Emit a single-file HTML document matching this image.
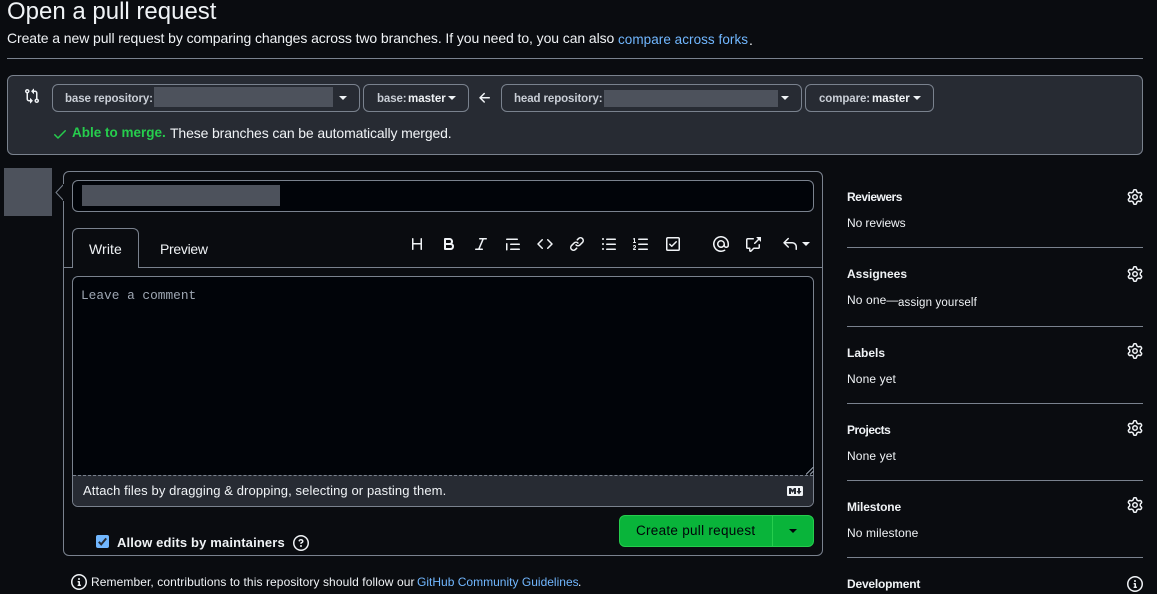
<!DOCTYPE html>
<html><head><meta charset="utf-8">
<style>
html,body{margin:0;padding:0;width:1157px;height:594px;overflow:hidden;background:#0a0c10}
body{position:relative;font-family:"Liberation Sans",sans-serif;color:#f0f3f6;font-size:14px}
.t{position:absolute;white-space:nowrap;line-height:20px;height:20px}
.b{position:absolute;box-sizing:border-box;border:1px solid #7a828e;border-radius:6px}
.f{position:absolute}
.sk{position:absolute;background:#4d525c}
svg.i{position:absolute;width:16px;height:16px;fill:#f0f3f6}
.hr{position:absolute;height:1px;background:#7a828e}
.btn{background:#272b33;height:28px;top:84px}
.mut{color:#c9ced6;font-weight:bold;font-size:11.5px;letter-spacing:-.1px}
.wh{color:#f0f3f6;font-weight:bold;font-size:11.5px}
.car{position:absolute;width:0;height:0;border-left:4px solid transparent;border-right:4px solid transparent;border-top:4px solid #f0f3f6}
.sh{font-size:12px;font-weight:bold;left:847px}
.sv{font-size:12px;left:847px}
a{color:#71b7ff;text-decoration:none}
</style></head><body>
<svg width="0" height="0" style="position:absolute"><defs>
<symbol id="gear" viewBox="0 0 16 16"><path d="M8 0a8.2 8.2 0 0 1 .701.031C9.444.095 9.99.645 10.16 1.29l.288 1.107c.018.066.079.158.212.224.231.114.454.243.668.386.123.082.233.09.299.071l1.103-.303c.644-.176 1.392.021 1.82.63.27.385.506.792.704 1.218.315.675.111 1.422-.364 1.891l-.814.806c-.049.048-.098.147-.088.294.016.257.016.515 0 .772-.01.147.038.246.088.294l.814.806c.475.469.679 1.216.364 1.891a7.977 7.977 0 0 1-.704 1.217c-.428.61-1.176.807-1.82.63l-1.102-.302c-.067-.019-.177-.011-.3.071a5.909 5.909 0 0 1-.668.386c-.133.066-.194.158-.211.224l-.29 1.106c-.168.646-.715 1.196-1.458 1.26a8.006 8.006 0 0 1-1.402 0c-.743-.064-1.289-.614-1.458-1.26l-.289-1.106c-.018-.066-.079-.158-.212-.224a5.738 5.738 0 0 1-.668-.386c-.123-.082-.233-.09-.299-.071l-1.103.303c-.644.176-1.392-.021-1.82-.63a8.12 8.12 0 0 1-.704-1.218c-.315-.675-.111-1.422.363-1.891l.815-.806c.05-.048.098-.147.088-.294a6.214 6.214 0 0 1 0-.772c.01-.147-.038-.246-.088-.294l-.815-.806C.635 6.045.431 5.298.746 4.623a7.92 7.92 0 0 1 .704-1.217c.428-.61 1.176-.807 1.82-.63l1.102.302c.067.019.177.011.3-.071.214-.143.437-.272.668-.386.133-.066.194-.158.211-.224l.29-1.106C6.009.645 6.556.095 7.299.03 7.53.01 7.764 0 8 0Zm-.571 1.525c-.036.003-.108.036-.137.146l-.289 1.105c-.147.561-.549.967-.998 1.189-.173.086-.34.183-.5.29-.417.278-.97.423-1.529.27l-1.103-.303c-.109-.03-.175.016-.195.045-.22.312-.412.644-.573.99-.014.031-.021.11.059.19l.815.806c.411.406.562.957.53 1.456a4.709 4.709 0 0 0 0 .582c.032.499-.119 1.05-.53 1.456l-.815.806c-.081.08-.073.159-.059.19.162.346.353.677.573.989.02.03.085.076.195.046l1.102-.303c.56-.153 1.113-.008 1.53.27.161.107.328.204.501.29.447.222.85.629.997 1.189l.289 1.105c.029.109.101.143.137.146a6.6 6.6 0 0 0 1.142 0c.036-.003.108-.036.137-.146l.289-1.105c.147-.561.549-.967.998-1.189.173-.086.34-.183.5-.29.417-.278.97-.423 1.529-.27l1.103.303c.109.029.175-.016.195-.045.22-.313.411-.644.573-.99.014-.031.021-.11-.059-.19l-.815-.806c-.411-.406-.562-.957-.53-1.456a4.709 4.709 0 0 0 0-.582c-.032-.499.119-1.05.53-1.456l.815-.806c.081-.08.073-.159.059-.19a6.464 6.464 0 0 0-.573-.989c-.02-.03-.085-.076-.195-.046l-1.102.303c-.56.153-1.113.008-1.53-.27a4.44 4.44 0 0 0-.501-.29c-.447-.222-.85-.629-.997-1.189l-.289-1.105c-.029-.11-.101-.143-.137-.146a6.6 6.6 0 0 0-1.142 0ZM11 8a3 3 0 1 1-6 0 3 3 0 0 1 6 0ZM9.5 8a1.5 1.5 0 1 0-3.001.001A1.5 1.5 0 0 0 9.5 8Z"/></symbol>
<symbol id="info" viewBox="0 0 16 16"><path d="M0 8a8 8 0 1 1 16 0A8 8 0 0 1 0 8Zm8-6.5a6.5 6.5 0 1 0 0 13 6.5 6.5 0 0 0 0-13ZM6.5 7.75A.75.75 0 0 1 7.25 7h1a.75.75 0 0 1 .75.75v2.75h.25a.75.75 0 0 1 0 1.5h-2a.75.75 0 0 1 0-1.5h.25v-2h-.25a.75.75 0 0 1-.75-.75ZM8 6a1 1 0 1 1 0-2 1 1 0 0 1 0 2Z"/></symbol>
</defs></svg>

<div class="t" style="left:7px;top:-3px;font-size:24px;line-height:30px;height:30px">Open a pull request</div>
<div class="t" style="left:7px;top:28px;letter-spacing:-.087px">Create a new pull request by comparing changes across two branches. If you need to, you can also</div>
<div class="t" style="left:618px;top:30px;font-size:13.5px;letter-spacing:.05px"><a>compare across forks</a></div>
<div class="t" style="left:749px;top:30px">.</div>
<div class="hr" style="left:7px;top:58px;width:1136px"></div>

<div class="b" style="left:7px;top:75px;width:1136px;height:80px;background:#272b33"></div>
<svg class="i" style="left:24px;top:88px" viewBox="0 0 16 16"><path d="M9.573.677A.25.25 0 0 1 10 .854V2.5h1A2.5 2.5 0 0 1 13.5 5v5.628a2.251 2.251 0 1 1-1.5 0V5a1 1 0 0 0-1-1h-1v1.646a.25.25 0 0 1-.427.177L7.177 3.427a.25.25 0 0 1 0-.354ZM6 12v-1.646a.25.25 0 0 1 .427-.177l2.396 2.396a.25.25 0 0 1 0 .354l-2.396 2.396A.25.25 0 0 1 6 15.146V13.5H5A2.5 2.5 0 0 1 2.5 11V5.372a2.25 2.25 0 1 1 1.5 0V11a1 1 0 0 0 1 1ZM4 3.25a.75.75 0 1 0-1.5 0 .75.75 0 0 0 1.5 0ZM12.75 12a.75.75 0 1 0 0 1.5.75.75 0 0 0 0-1.5Z"/></svg>

<div class="b btn" style="left:52px;width:308px"></div>
<div class="t mut" style="left:65px;top:89px">base repository:</div>
<div class="sk" style="left:154px;top:87px;width:179px;height:20px"></div>
<div class="car" style="left:339px;top:96px"></div>
<div class="b btn" style="left:363px;width:106px"></div>
<div class="t mut" style="left:377px;top:89px">base:</div>
<div class="t wh" style="left:408px;top:89px">master</div>
<div class="car" style="left:448px;top:96px"></div>
<svg class="i" style="left:477px;top:90px" viewBox="0 0 16 16"><path d="M7.78 12.53a.75.75 0 0 1-1.06 0L2.47 8.28a.75.75 0 0 1 0-1.06l4.25-4.25a.751.751 0 0 1 1.042.018.751.751 0 0 1 .018 1.042L4.81 7h7.44a.75.75 0 0 1 0 1.5H4.81l2.97 2.97a.75.75 0 0 1 0 1.06Z"/></svg>
<div class="b btn" style="left:501px;width:301px"></div>
<div class="t mut" style="left:514px;top:89px">head repository:</div>
<div class="sk" style="left:604px;top:90px;width:174px;height:17px"></div>
<div class="car" style="left:781px;top:96px"></div>
<div class="b btn" style="left:805px;width:129px"></div>
<div class="t mut" style="left:819px;top:89px">compare:</div>
<div class="t wh" style="left:872px;top:89px">master</div>
<div class="car" style="left:913px;top:96px"></div>

<svg class="i" style="left:52px;top:126px;fill:#26cd4d" viewBox="0 0 16 16"><path d="M13.78 4.22a.75.75 0 0 1 0 1.06l-7.25 7.25a.75.75 0 0 1-1.06 0L2.22 9.28a.751.751 0 0 1 .018-1.042.751.751 0 0 1 1.042-.018L6 10.94l6.72-6.72a.75.75 0 0 1 1.06 0Z"/></svg>
<div class="t" style="left:72px;top:123px;font-weight:bold;color:#26cd4d;font-size:13.5px">Able to merge.</div>
<div class="t" style="left:170px;top:123px;letter-spacing:-.13px">These branches can be automatically merged.</div>

<div class="sk" style="left:4px;top:168px;width:48px;height:48px"></div>

<div class="b" style="left:63px;top:171px;width:760px;height:385px"></div>
<svg style="position:absolute;left:55px;top:184px" width="9" height="17"><path d="M8.5 0.5L1 8.5L8.5 16.5" fill="#0a0c10" stroke="#7a828e"/><rect x="8" y="0" width="1" height="17" fill="#0a0c10"/></svg>

<div class="b" style="left:72px;top:180px;width:742px;height:32px;background:#010409"></div>
<div class="sk" style="left:82px;top:185px;width:198px;height:21px"></div>

<div class="hr" style="left:64px;top:267px;width:758px"></div>
<div class="f" style="left:72px;top:228px;width:67px;height:40px;box-sizing:border-box;border:1px solid #7a828e;border-bottom:0;border-radius:6px 6px 0 0;background:#0a0c10"></div>
<div class="t" style="left:89px;top:239px;letter-spacing:.1px">Write</div>
<div class="t" style="left:160px;top:239px;letter-spacing:-.3px">Preview</div>

<svg class="i" style="left:409px;top:236px" viewBox="0 0 16 16"><path d="M3.75 2a.75.75 0 0 1 .75.75V7h7V2.75a.75.75 0 0 1 1.5 0v10.5a.75.75 0 0 1-1.5 0V8.5h-7v4.75a.75.75 0 0 1-1.5 0V2.75A.75.75 0 0 1 3.75 2Z"/></svg>
<svg class="i" style="left:441px;top:236px" viewBox="0 0 16 16"><path d="M4 2h4.5a3.501 3.501 0 0 1 2.852 5.53A3.499 3.499 0 0 1 9.5 14H4a1 1 0 0 1-1-1V3a1 1 0 0 1 1-1Zm1 7v3h4.5a1.5 1.5 0 0 0 0-3Zm3.5-2a1.5 1.5 0 0 0 0-3H5v3Z"/></svg>
<svg class="i" style="left:473px;top:236px" viewBox="0 0 16 16"><path d="M6 2.75A.75.75 0 0 1 6.75 2h6.5a.75.75 0 0 1 0 1.5h-2.505l-3.858 9H9.25a.75.75 0 0 1 0 1.5h-6.5a.75.75 0 0 1 0-1.5h2.505l3.858-9H6.75A.75.75 0 0 1 6 2.75Z"/></svg>
<svg class="i" style="left:505px;top:236px" viewBox="0 0 16 16"><path d="M1.75 2.5h10.5a.75.75 0 0 1 0 1.5H1.75a.75.75 0 0 1 0-1.5Zm4 5h8.5a.75.75 0 0 1 0 1.5h-8.5a.75.75 0 0 1 0-1.5Zm0 5h8.5a.75.75 0 0 1 0 1.5h-8.5a.75.75 0 0 1 0-1.5ZM2.5 7.75v6a.75.75 0 0 1-1.5 0v-6a.75.75 0 0 1 1.5 0Z"/></svg>
<svg class="i" style="left:537px;top:236px" viewBox="0 0 16 16"><path d="m11.28 3.22 4.25 4.25a.75.75 0 0 1 0 1.06l-4.25 4.25a.749.749 0 0 1-1.275-.326.749.749 0 0 1 .215-.734L13.94 8l-3.72-3.72a.749.749 0 0 1 .326-1.275.749.749 0 0 1 .734.215Zm-6.56 0a.751.751 0 0 1 1.042.018.751.751 0 0 1 .018 1.042L2.06 8l3.72 3.72a.749.749 0 0 1-.326 1.275.749.749 0 0 1-.734-.215L.47 8.53a.75.75 0 0 1 0-1.06Z"/></svg>
<svg class="i" style="left:569px;top:236px" viewBox="0 0 16 16"><path d="m7.775 3.275 1.25-1.25a3.5 3.5 0 1 1 4.95 4.95l-2.5 2.5a3.5 3.5 0 0 1-4.95 0 .751.751 0 0 1 .018-1.042.751.751 0 0 1 1.042-.018 1.998 1.998 0 0 0 2.83 0l2.5-2.5a2.002 2.002 0 0 0-2.83-2.83l-1.25 1.25a.751.751 0 0 1-1.042-.018.751.751 0 0 1-.018-1.042Zm-4.69 9.64a1.998 1.998 0 0 0 2.83 0l1.25-1.25a.751.751 0 0 1 1.042.018.751.751 0 0 1 .018 1.042l-1.25 1.25a3.5 3.5 0 1 1-4.95-4.95l2.5-2.5a3.5 3.5 0 0 1 4.95 0 .751.751 0 0 1-.018 1.042.751.751 0 0 1-1.042.018 1.998 1.998 0 0 0-2.83 0l-2.5 2.5a1.998 1.998 0 0 0 0 2.83Z"/></svg>
<svg class="i" style="left:601px;top:236px" viewBox="0 0 16 16"><path d="M5.75 2.5h8.5a.75.75 0 0 1 0 1.5h-8.5a.75.75 0 0 1 0-1.5Zm0 5h8.5a.75.75 0 0 1 0 1.5h-8.5a.75.75 0 0 1 0-1.5Zm0 5h8.5a.75.75 0 0 1 0 1.5h-8.5a.75.75 0 0 1 0-1.5ZM2 14a1 1 0 1 1 0-2 1 1 0 0 1 0 2Zm1-6a1 1 0 1 1-2 0 1 1 0 0 1 2 0ZM2 4a1 1 0 1 1 0-2 1 1 0 0 1 0 2Z"/></svg>
<svg class="i" style="left:633px;top:236px" viewBox="0 0 16 16"><path d="M5 3.25a.75.75 0 0 1 .75-.75h8.5a.75.75 0 0 1 0 1.5h-8.5A.75.75 0 0 1 5 3.25Zm0 5a.75.75 0 0 1 .75-.75h8.5a.75.75 0 0 1 0 1.5h-8.5A.75.75 0 0 1 5 8.25Zm0 5a.75.75 0 0 1 .75-.75h8.5a.75.75 0 0 1 0 1.5h-8.5a.75.75 0 0 1-.75-.75ZM.924 10.32a.5.5 0 0 1-.851-.525l.001-.001.001-.002.002-.004.007-.011c.097-.144.215-.273.348-.384.228-.19.588-.392 1.068-.392.468 0 .858.181 1.126.484.259.294.377.673.377 1.038 0 .987-.686 1.495-1.156 1.845l-.047.035c-.303.225-.522.4-.654.597h1.357a.5.5 0 0 1 0 1H.5a.5.5 0 0 1-.5-.5c0-1.005.692-1.52 1.167-1.875l.035-.025c.531-.396.8-.625.8-1.078a.57.57 0 0 0-.128-.376C1.806 10.068 1.695 10 1.5 10a.658.658 0 0 0-.429.163.835.835 0 0 0-.144.153ZM2.003 2.5V6h.503a.5.5 0 0 1 0 1H.5a.5.5 0 0 1 0-1h.503V3.308l-.28.14a.5.5 0 0 1-.446-.895l1.003-.5a.5.5 0 0 1 .723.447Z"/></svg>
<svg class="i" style="left:665px;top:236px" viewBox="0 0 16 16"><path d="M2.75 1h10.5c.966 0 1.75.784 1.75 1.75v10.5A1.75 1.75 0 0 1 13.25 15H2.75A1.75 1.75 0 0 1 1 13.25V2.75C1 1.784 1.784 1 2.75 1ZM2.5 2.75v10.5c0 .138.112.25.25.25h10.5a.25.25 0 0 0 .25-.25V2.75a.25.25 0 0 0-.25-.25H2.75a.25.25 0 0 0-.25.25Zm9.28 3.53-4.5 4.5a.75.75 0 0 1-1.06 0l-2-2a.751.751 0 0 1 .018-1.042.751.751 0 0 1 1.042-.018l1.47 1.47 3.97-3.97a.751.751 0 0 1 1.042.018.751.751 0 0 1 .018 1.042Z"/></svg>
<svg class="i" style="left:713px;top:236px" viewBox="0 0 16 16"><path d="M4.75 2.37a6.501 6.501 0 0 0 6.5 11.26.75.75 0 0 1 .75 1.298A7.999 7.999 0 0 1 .989 4.148 8 8 0 0 1 16 7.75v1.5a2.75 2.75 0 0 1-5.072 1.475 3.999 3.999 0 0 1-6.65-4.19A4 4 0 0 1 12 8v1.25a1.25 1.25 0 0 0 2.5 0V7.867a6.5 6.5 0 0 0-9.75-5.496ZM10.5 8a2.5 2.5 0 1 0-5 0 2.5 2.5 0 0 0 5 0Z"/></svg>
<svg class="i" style="left:745px;top:236px" viewBox="0 0 16 16"><path d="M2.75 3.5a.25.25 0 0 0-.25.25v7.5c0 .138.112.25.25.25h2a.75.75 0 0 1 .75.75v2.19l2.72-2.72a.749.749 0 0 1 .53-.22h4.5a.25.25 0 0 0 .25-.25v-2.5a.75.75 0 0 1 1.5 0v2.5A1.75 1.75 0 0 1 13.25 13H9.06l-2.573 2.573A1.458 1.458 0 0 1 4 14.543V13H2.75A1.75 1.75 0 0 1 1 11.25v-7.5C1 2.784 1.784 2 2.75 2h5.5a.75.75 0 0 1 0 1.5ZM16 1.25v4.146a.25.25 0 0 1-.427.177L14.03 4.03l-3.75 3.75a.749.749 0 0 1-1.275-.326.749.749 0 0 1 .215-.734l3.75-3.75-1.543-1.543A.25.25 0 0 1 11.604 1h4.146a.25.25 0 0 1 .25.25Z"/></svg>
<svg class="i" style="left:782px;top:236px" viewBox="0 0 16 16"><path d="M6.78 1.97a.75.75 0 0 1 0 1.06L3.81 6h6.44A4.75 4.75 0 0 1 15 10.75v2.5a.75.75 0 0 1-1.5 0v-2.5a3.25 3.25 0 0 0-3.25-3.25H3.81l2.97 2.97a.749.749 0 0 1-.326 1.275.749.749 0 0 1-.734-.215L1.47 7.28a.75.75 0 0 1 0-1.06l4.25-4.25a.75.75 0 0 1 1.06 0Z"/></svg>
<div class="car" style="left:802px;top:242px"></div>

<div class="b" style="left:72px;top:276px;width:742px;height:231px;background:#010409;overflow:hidden">
  <div class="f" style="left:0;top:198px;width:740px;height:32px;background:#272b33;border-top:1px dashed #7a828e;box-sizing:border-box"></div>
</div>
<div class="t" style="left:81px;top:286px;font-family:'Liberation Mono',monospace;font-size:12.8px;color:#9ea7b3">Leave a comment</div>
<svg style="position:absolute;left:806px;top:467px" width="8" height="8"><path d="M0 7.5L7.5 0M4 7.5L7.5 4" stroke="#9ea7b3" fill="none"/></svg>
<div class="t" style="left:83px;top:481px;font-size:13px;letter-spacing:.1px">Attach files by dragging &amp; dropping, selecting or pasting them.</div>
<svg class="i" style="left:787px;top:483px" viewBox="0 0 16 16"><path d="M14.85 3c.63 0 1.15.52 1.14 1.15v7.7c0 .63-.51 1.15-1.15 1.15H1.15C.52 13 0 12.48 0 11.84V4.15C0 3.52.52 3 1.15 3ZM9 11V5H7L5.5 7 4 5H2v6h2V8l1.5 1.92L7 8v3Zm2.99.5L14.5 8H13V5h-2v3H9.5Z"/></svg>

<div class="f" style="left:96px;top:535px;width:13px;height:13px;background:#71b7ff;border-radius:2px"></div>
<svg style="position:absolute;left:96px;top:535px" width="13" height="13"><path d="M2.8 6.8L5.2 9.4L10.2 3.4" stroke="#272b33" stroke-width="2" fill="none"/></svg>
<div class="t" style="left:117px;top:533px;font-weight:bold;font-size:13px;letter-spacing:.15px">Allow edits by maintainers</div>
<svg class="i" style="left:293px;top:535px" viewBox="0 0 16 16"><path d="M0 8a8 8 0 1 1 16 0A8 8 0 0 1 0 8Zm8-6.5a6.5 6.5 0 1 0 0 13 6.5 6.5 0 0 0 0-13ZM6.92 6.085h.001a.749.749 0 1 1-1.342-.67c.169-.339.436-.701.849-.977C6.845 4.16 7.369 4 8 4a2.756 2.756 0 0 1 1.637.525c.503.377.863.965.863 1.725 0 .448-.115.83-.329 1.15-.205.307-.47.513-.692.662-.109.072-.22.138-.313.195l-.006.004a6.24 6.24 0 0 0-.26.16.952.952 0 0 0-.276.245.75.75 0 0 1-1.248-.832c.184-.264.42-.489.692-.661.103-.067.207-.132.313-.195l.007-.004c.1-.061.182-.11.258-.161a.969.969 0 0 0 .277-.245C8.96 6.514 9 6.427 9 6.25a.612.612 0 0 0-.262-.525A1.27 1.27 0 0 0 8 5.5c-.369 0-.595.09-.74.187a1.01 1.01 0 0 0-.34.398ZM9 11a1 1 0 1 1-2 0 1 1 0 0 1 2 0Z"/></svg>

<div class="f" style="left:619px;top:515px;width:195px;height:32px;box-sizing:border-box;background:#09b43a;border:1px solid #26cd4d;border-radius:6px"></div>
<div class="f" style="left:772px;top:516px;width:1px;height:30px;background:#26cd4d"></div>
<div class="t" style="left:636px;top:521px;font-size:13.5px;color:#010409;letter-spacing:.28px">Create pull request</div>
<div class="car" style="left:789px;top:529px;border-top-color:#010409"></div>

<svg class="i" style="left:71px;top:574px"><use href="#info"/></svg>
<div class="t" style="left:91px;top:572px;font-size:12px;letter-spacing:.09px">Remember, contributions to this repository should follow our</div>
<div class="t" style="left:417px;top:572px;font-size:12px;letter-spacing:.01px"><a>GitHub Community Guidelines</a></div>
<div class="t" style="left:578px;top:572px;font-size:12px">.</div>

<div class="t sh" style="top:187px;letter-spacing:-.5px">Reviewers</div>
<svg class="i" style="left:1127px;top:189px"><use href="#gear"/></svg>
<div class="t sv" style="top:213px;letter-spacing:-.08px">No reviews</div>
<div class="hr" style="left:847px;top:247px;width:296px"></div>

<div class="t sh" style="top:264px">Assignees</div>
<svg class="i" style="left:1127px;top:266px"><use href="#gear"/></svg>
<div class="t sv" style="top:290px;letter-spacing:.12px">No one—</div>
<div class="t sv" style="left:898px;top:293px;font-size:11.5px;letter-spacing:.15px">assign yourself</div>
<div class="hr" style="left:847px;top:326px;width:296px"></div>

<div class="t sh" style="top:343px">Labels</div>
<svg class="i" style="left:1127px;top:343px"><use href="#gear"/></svg>
<div class="t sv" style="top:369px;letter-spacing:.12px">None yet</div>
<div class="hr" style="left:847px;top:403px;width:296px"></div>

<div class="t sh" style="top:420px;letter-spacing:-.5px">Projects</div>
<svg class="i" style="left:1127px;top:420px"><use href="#gear"/></svg>
<div class="t sv" style="top:446px;letter-spacing:.12px">None yet</div>
<div class="hr" style="left:847px;top:480px;width:296px"></div>

<div class="t sh" style="top:497px;letter-spacing:-.15px">Milestone</div>
<svg class="i" style="left:1127px;top:497px"><use href="#gear"/></svg>
<div class="t sv" style="top:523px;letter-spacing:.12px">No milestone</div>
<div class="hr" style="left:847px;top:557px;width:296px"></div>

<div class="t sh" style="top:574px;letter-spacing:-.2px">Development</div>
<svg class="i" style="left:1127px;top:576px"><use href="#info"/></svg>
</body></html>
